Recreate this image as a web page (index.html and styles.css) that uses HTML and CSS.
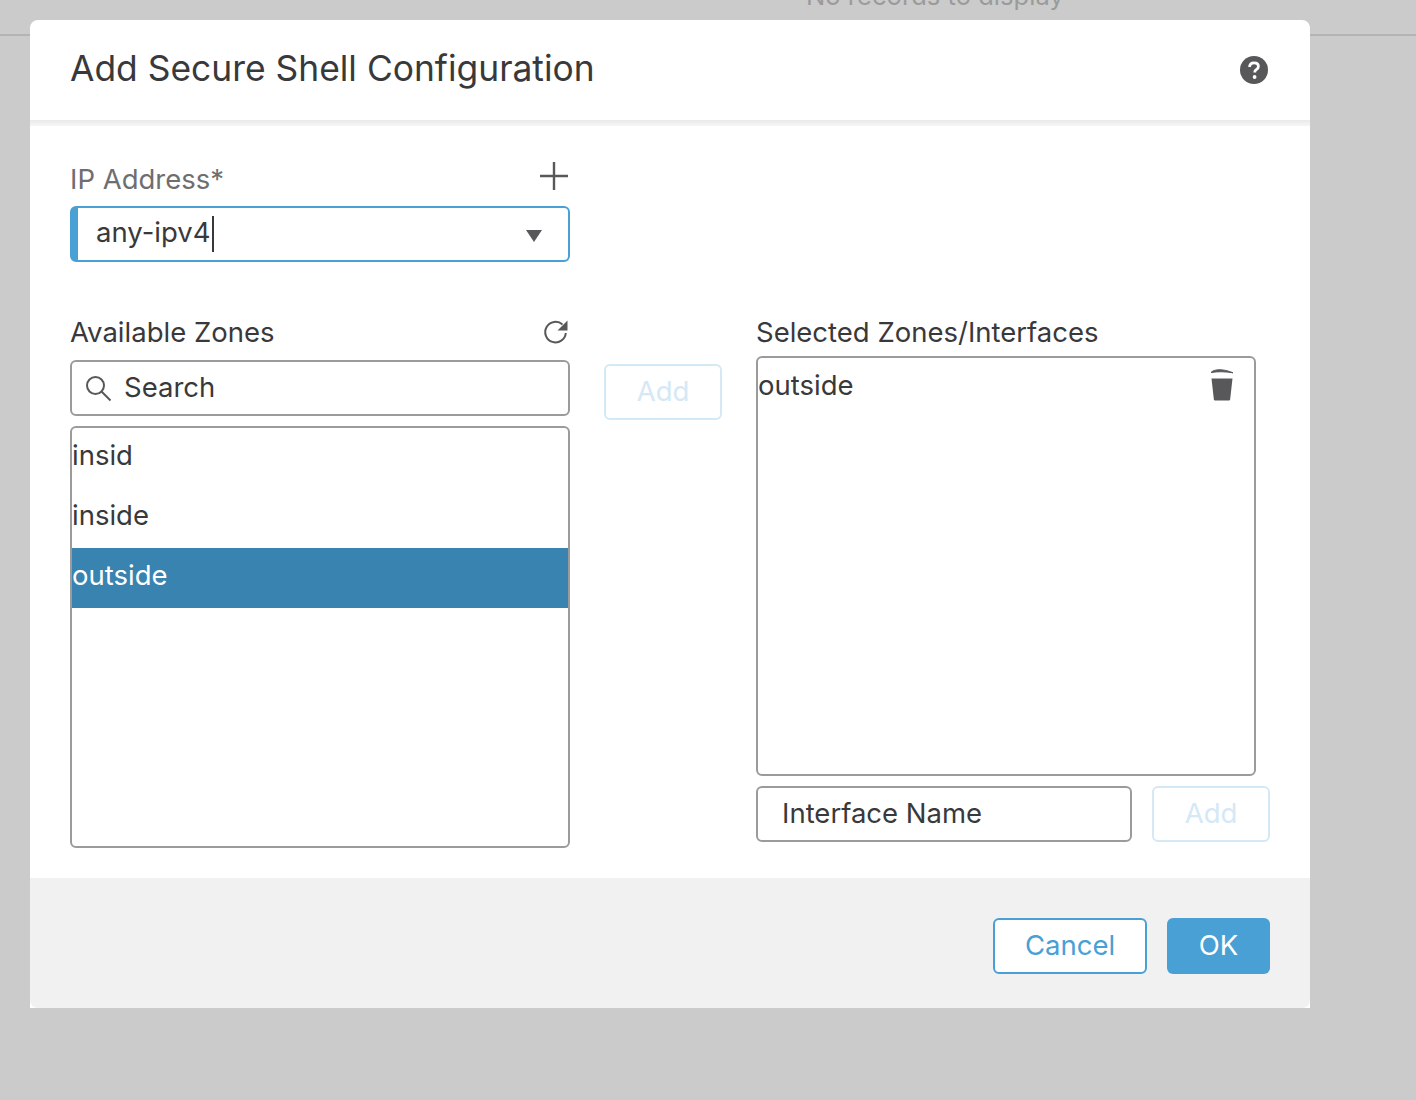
FILE: index.html
```html
<!DOCTYPE html>
<html lang="en">

<head>
    <meta charset="UTF-8">
    <title>Add Secure Shell Configuration</title>
    <link rel="stylesheet" href="styles.css">
</head>

<body>
    <div class="backdropText">No records to display</div>
    <div class="backdropLine"></div>

    <div class="dialog">
        <div class="dialogHeader">
            <h1>Add Secure Shell Configuration</h1>
            <svg class="helpIcon" width="28" height="28" viewBox="0 0 28 28">
                <circle cx="14" cy="14" r="14" fill="#58585b"/>
                <path d="M9.600 11c0-2.700 1.900-4.200 4.500-4.200 2.500 0 4.300 1.400 4.300 3.600 0 1.600-.9 2.400-2.100 3.200-1.100.7-1.500 1.200-1.500 2.300v.7" fill="none" stroke="#fff" stroke-width="2.800"/>
                <circle cx="14.600" cy="21" r="1.900" fill="#fff"/>
            </svg>
        </div>

        <div class="dialogBody">
            <div class="ipColumn">
                <div class="fieldHead">
                    <label class="mutedLabel">IP Address*</label>
                    <svg class="plusIcon" width="30" height="30" viewBox="0 0 30 30">
                        <path d="M15 1v28M1 15h28" stroke="#58585b" stroke-width="2.400"/>
                    </svg>
                </div>
                <div class="ipSelect">
                    <span>any-ipv4</span><span class="caret"></span>
                    <svg class="arrowIcon" width="16" height="12" viewBox="0 0 16 12">
                        <path d="M0 0h16l-8 12z" fill="#58585b"/>
                    </svg>
                </div>
            </div>

            <div class="zones">
                <div class="zoneColumn">
                    <div class="zoneHead">
                        <label>Available Zones</label>
                        <svg class="refreshIcon" width="26" height="26" viewBox="0 0 26 26">
                            <path d="M19.500 5.500A10.300 10.300 0 1 0 22.800 14" fill="none" stroke="#58585b" stroke-width="2"/>
                            <path d="M24.500 1.500v10h-10z" fill="#58585b"/>
                        </svg>
                    </div>
                    <div class="searchBox">
                        <svg width="28" height="28" viewBox="0 0 28 28">
                            <circle cx="11.500" cy="11.500" r="8.500" fill="none" stroke="#58585b" stroke-width="2"/>
                            <path d="M17.500 17.500l9 9" stroke="#58585b" stroke-width="2"/>
                        </svg>
                        <input type="text" placeholder="Search">
                    </div>
                    <ul class="zoneList">
                        <li>insid</li>
                        <li>inside</li>
                        <li class="selected">outside</li>
                    </ul>
                </div>

                <div class="addColumn">
                    <button class="addButton" disabled>Add</button>
                </div>

                <div class="selectedColumn">
                    <label>Selected Zones/Interfaces</label>
                    <div class="selectedBox">
                        <span>outside</span>
                        <svg class="trashIcon" width="24" height="34" viewBox="0 0 24 34">
                            <path d="M1 4.500C4 1 13 .5 23 4.800 15 3.500 8 3.400 1 4.500z" fill="#58585b" stroke="#58585b"/>
                            <path d="M1.500 10.500h21l-2.300 20.500c-.1 1-.8 1.500-1.700 1.500h-13c-.9 0-1.600-.5-1.700-1.500z" fill="#58585b"/>
                        </svg>
                    </div>
                    <div class="interfaceRow">
                        <input type="text" placeholder="Interface Name">
                        <button class="addButton" disabled>Add</button>
                    </div>
                </div>
            </div>
        </div>

        <div class="dialogFooter">
            <button class="cancelButton">Cancel</button>
            <button class="okButton">OK</button>
        </div>
    </div>
</body>

</html>
```

FILE: styles.css
```css
html,
body {
    height: 1100px;
    overflow: hidden;
}

body {
    margin: 0;
    background-color: #cbcbcb;
    color: #39393b;
    font-family: Inter, "Liberation Sans", sans-serif;
    font-size: 27.5px;
    padding-top: 20px;
    box-sizing: border-box;
}

label {
    display: block;
    line-height: 27px;
}

button {
    font-family: inherit;
    font-size: 27.5px;
    padding: 0 0 3px;
    cursor: pointer;
}

input {
    font-family: inherit;
    font-size: 27.5px;
    color: #39393b;
    border: 0;
    outline: 0;
    padding: 0 0 3px;
    background: none;
}

input::placeholder {
    color: #39393b;
    opacity: 1;
}

.backdropText {
    position: absolute;
    top: -18px;
    left: 806px;
    color: #9b9b9b;
    font-size: 25.6px;
    line-height: 28px;
    white-space: nowrap;
}

.backdropLine {
    position: absolute;
    top: 34px;
    left: 0;
    right: 0;
    height: 2px;
    background-color: #b4b4b4;
}

.dialog {
    position: relative;
    margin-left: 30px;
    width: 1280px;
    height: 988px;
    background-color: #fff;
    border-radius: 8px 8px 0 0;
    overflow: hidden;
    display: flex;
    flex-direction: column;
}

.dialogHeader {
    height: 100px;
    padding: 0 42px 0 40px;
    display: flex;
    align-items: center;
    justify-content: space-between;
    flex: none;
}

.dialogHeader h1 {
    margin: 0 0 4px;
    font-size: 35.4px;
    font-weight: normal;
    color: #39393b;
}

.dialogBody {
    flex: 1;
    padding: 40px 40px 0;
    background: linear-gradient(#e9e9e9, #f6f6f6) top / 100% 6px no-repeat;
}

.ipColumn {
    width: 500px;
}

.fieldHead {
    height: 46px;
    display: flex;
    align-items: flex-start;
    justify-content: space-between;
}

.mutedLabel {
    color: #6e6e70;
    margin-top: 6px;
}

.plusIcon {
    display: block;
    margin-right: 1px;
    margin-top: 1px;
}

.ipSelect {
    height: 56px;
    box-sizing: border-box;
    border: 2px solid #49a0d5;
    border-left-width: 8px;
    border-radius: 6px;
    padding-left: 18px;
    display: flex;
    align-items: center;
    position: relative;
}

.ipSelect span:first-child {
    margin-bottom: 4px;
}

.caret {
    width: 2px;
    height: 36px;
    margin-left: 1px;
    background-color: #39393b;
}

.arrowIcon {
    position: absolute;
    right: 26px;
    top: 22px;
}

.zones {
    margin-top: 57px;
    display: flex;
    gap: 34px;
}

.zoneColumn {
    width: 500px;
}

.zoneHead {
    display: flex;
    justify-content: space-between;
    height: 41px;
}

.refreshIcon {
    display: block;
    margin-right: 1px;
}

.searchBox {
    height: 56px;
    box-sizing: border-box;
    border: 2px solid #9b9b9e;
    border-radius: 6px;
    padding-left: 12px;
    display: flex;
    align-items: center;
    gap: 12px;
}

.searchBox input {
    flex: 1;
    min-width: 0;
}

.zoneList {
    list-style: none;
    margin: 10px 0 0;
    padding: 0;
    height: 422px;
    box-sizing: border-box;
    border: 2px solid #9b9b9e;
    border-radius: 6px;
}

.zoneList li {
    height: 60px;
    line-height: 55px;
    overflow: hidden;
}

.zoneList li.selected {
    background-color: #3883b0;
    color: #fff;
}

.addColumn {
    width: 118px;
    padding-top: 45px;
}

.addButton {
    width: 118px;
    height: 56px;
    background-color: #fff;
    border: 2px solid #d5e8f6;
    border-radius: 6px;
    color: #d5e8f6;
    cursor: default;
}

.selectedColumn {
    width: 514px;
}

.selectedBox {
    margin-top: 10px;
    width: 500px;
    height: 420px;
    box-sizing: border-box;
    border: 2px solid #9b9b9e;
    border-radius: 6px;
    display: flex;
    justify-content: space-between;
    align-items: flex-start;
    line-height: 55px;
}

.trashIcon {
    margin: 10px 20px 0 0;
}

.interfaceRow {
    margin-top: 10px;
    display: flex;
    gap: 20px;
}

.interfaceRow input {
    width: 376px;
    height: 56px;
    box-sizing: border-box;
    border: 2px solid #9b9b9e;
    border-radius: 6px;
    padding-left: 24px;
}

.dialogFooter {
    height: 130px;
    flex: none;
    background-color: #f1f1f1;
    border-radius: 0 0 8px 8px;
    padding: 40px 40px 0;
    box-sizing: border-box;
    display: flex;
    justify-content: flex-end;
    align-items: flex-start;
    gap: 20px;
}

.cancelButton {
    width: 154px;
    height: 56px;
    background-color: #fff;
    border: 2px solid #49a0d5;
    border-radius: 6px;
    color: #49a0d5;
}

.okButton {
    width: 103px;
    height: 56px;
    background-color: #49a0d5;
    border: 0;
    border-radius: 6px;
    color: #fff;
}
```
